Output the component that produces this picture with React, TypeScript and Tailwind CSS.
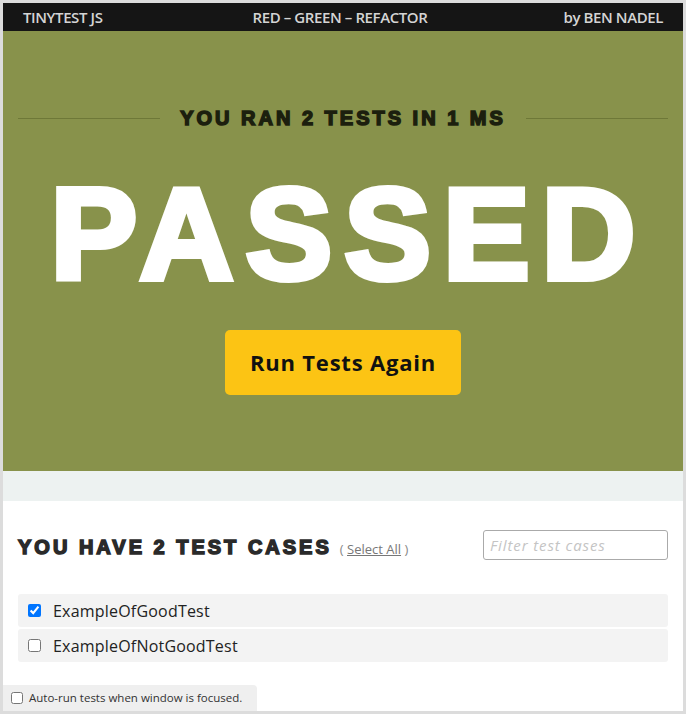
export default function App() {
  const cases = [
    { name: "ExampleOfGoodTest", checked: true },
    { name: "ExampleOfNotGoodTest", checked: false },
  ];

  return (
    <div className="h-[714px] w-[686px] bg-[#dcdcdc] p-[3px]">
      <div className="flex h-full flex-col bg-white">
        <header className="flex h-[28px] items-center justify-between bg-[#151515] px-[20px] font-['Open_Sans',sans-serif] text-[15px] font-semibold tracking-[-0.4px] text-[#d4d4d4]">
          <span>TINYTEST JS</span>
          <span className="pl-[14px]">RED – GREEN – REFACTOR</span>
          <span>by BEN NADEL</span>
        </header>

        <section className="flex h-[440px] flex-col items-center bg-[#88924b] pt-[72px]">
          <div className="flex w-full items-center gap-[20px] px-[15px]">
            <div className="h-px flex-1 bg-[#6e7838]" />
            <h2 className="font-['Liberation_Sans',sans-serif] text-[20px] font-bold leading-[30px] tracking-[3px] text-[#1c1f0e] [-webkit-text-stroke:1.5px_#1c1f0e]">
              YOU RAN 2 TESTS IN 1 MS
            </h2>
            <div className="h-px flex-1 bg-[#6e7838]" />
          </div>
          <div className="mt-[36px] ml-[12px] font-['Liberation_Sans',sans-serif] text-[130px] font-bold leading-[130px] tracking-[12px] text-white [-webkit-text-stroke:6px_white]">
            PASSED
          </div>
          <button
            type="button"
            className="mt-[31px] h-[65px] w-[236px] rounded-[5px] bg-[#fcc414] font-['Open_Sans',sans-serif] text-[22px] font-bold tracking-[0.8px] text-[#111]"
          >
            Run Tests Again
          </button>
        </section>

        <div className="h-[30px] bg-[#edf2f1]" />

        <section className="px-[15px] pt-[27px]">
          <div className="flex items-center justify-between">
            <div className="flex items-baseline gap-[8px] pt-[4px]">
              <h3 className="font-['Liberation_Sans',sans-serif] text-[20px] font-bold tracking-[3px] text-[#2a2a2a] [-webkit-text-stroke:1.5px_#2a2a2a]">
                YOU HAVE 2 TEST CASES
              </h3>
              <span className="font-['Open_Sans',sans-serif] text-[13px] text-[#888]">
                ( <a className="text-[#777] underline">Select All</a> )
              </span>
            </div>
            <input
              type="text"
              placeholder="Filter test cases"
              className="h-[30px] w-[185px] rounded-[3px] border border-[#aaa] px-[6px] font-['Open_Sans',sans-serif] text-[15px] italic tracking-[0.9px] placeholder:text-[#c4c4c4]"
            />
          </div>

          <ul className="mt-[32px] flex flex-col gap-[2px]">
            {cases.map((c) => (
              <li
                key={c.name}
                className="flex h-[33px] items-center gap-[12px] rounded-[3px] bg-[#f3f3f3] px-[10px] font-['Open_Sans',sans-serif] text-[16px] tracking-[0.2px] text-[#222]"
              >
                <input type="checkbox" defaultChecked={c.checked} className="h-[13px] w-[13px]" />
                <span>{c.name}</span>
              </li>
            ))}
          </ul>
        </section>

        <footer className="mt-auto flex h-[26px] w-[254px] items-center gap-[6px] rounded-tr-[4px] bg-[#efefef] px-[8px] font-['Open_Sans',sans-serif] text-[11.5px] text-[#333]">
          <input type="checkbox" className="h-[12px] w-[12px]" />
          <span>Auto-run tests when window is focused.</span>
        </footer>
      </div>
    </div>
  );
}
